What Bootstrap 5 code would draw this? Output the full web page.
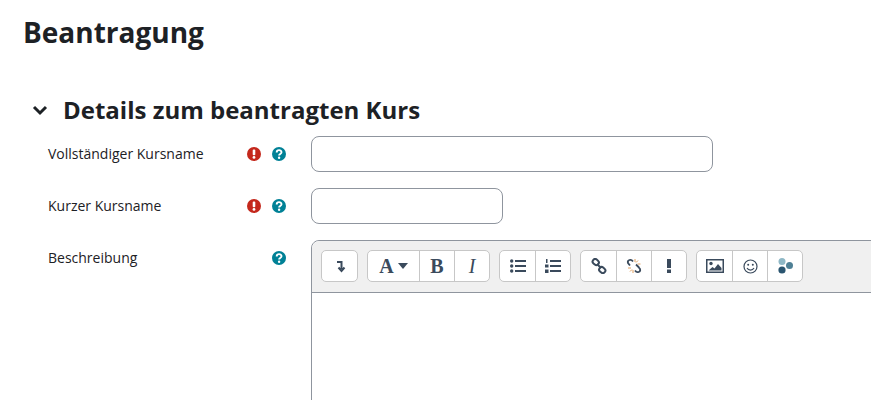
<!DOCTYPE html>
<html lang="de">
<head>
    <meta charset="UTF-8">
    <meta name="viewport" content="width=device-width, initial-scale=1.0">
    <title>Beantragung</title>
    <link rel="stylesheet" href="https://cdn.jsdelivr.net/npm/bootstrap@5.3.1/dist/css/bootstrap.min.css">
    <style>
        html, body { height: 400px; overflow: hidden; }
        body { font-family: "Open Sans", "Noto Sans", sans-serif; color: #1d2125; background: #fff; }

        .page-wrap { padding: 12px 0 0 23px; width: 1000px; }
        .page-title { font-size: 28px; font-weight: 700; line-height: 40px; margin: 0 0 38px; font-family: "Open Sans", sans-serif; }

        .section-head { margin: 0 0 6px 9px; gap: 15px; height: 40px; }
        .section-title { font-size: 24px; font-weight: 700; line-height: 40px; margin: 0; }

        .form-line { margin-left: 25px; }
        .label-col { width: 199px; font-size: 14px; line-height: 20px; padding-top: 8px; flex-shrink: 0; }
        .icon-col { width: 64px; flex-shrink: 0; padding-top: 11px; gap: 11px; justify-content: flex-end; padding-right: 25px; }
        .help-icon, .req-icon { width: 14px; height: 14px; display: block; }

        .name-input { height: 36px; border: 1px solid #8f959e; border-radius: 8px; }
        .name-long { width: 402px; }
        .name-short { width: 192px; }

        .editor-box { width: 620px; height: 300px; border: 1px solid #8f959e; border-radius: 8px 0 0 0; }
        .editor-tools { background: #f0f0f0; height: 52px; padding: 9px; gap: 9px; border-bottom: 1px solid #8f959e; border-radius: 8px 0 0 0; }
        .tool-group { height: 32px; background: #fff; border: 1px solid #c7c7c7; border-radius: 5px; }
        .tool { width: 35px; height: 30px; color: #3a4a5c; border-left: 1px solid #c7c7c7; }
        .tool:first-child { border-left: 0; }
        .tool svg { display: block; }
        .tool-wide { width: 51px; }
        .tool-letter { font-family: "Liberation Serif", serif; font-weight: 700; font-size: 20px; line-height: 1; }
    </style>
</head>
<body>

<div class="page-wrap">
    <h2 class="page-title">Beantragung</h2>

    <div class="section-head d-flex align-items-center">
        <svg width="16" height="16" viewBox="0 0 16 16"><path d="M2 5l6 6 6-6" fill="none" stroke="#1d2125" stroke-width="3"/></svg>
        <h3 class="section-title">Details zum beantragten Kurs</h3>
    </div>

    <div class="form-line d-flex mb-3">
        <div class="label-col">Vollständiger Kursname</div>
        <div class="icon-col d-flex">
            <svg class="req-icon" viewBox="0 0 14 14"><circle cx="7" cy="7" r="7" fill="#c4281c"/><rect x="5.7" y="2.5" width="2.6" height="5.8" rx="1" fill="#fff"/><circle cx="7" cy="10.4" r="1.4" fill="#fff"/></svg>
            <svg class="help-icon" viewBox="0 0 14 14"><circle cx="7" cy="7" r="7" fill="#008196"/><path d="M4.7 5.4c0-3 4.8-3 4.8-.2 0 1.8-2.4 1.7-2.4 3.2" fill="none" stroke="#fff" stroke-width="1.9"/><circle cx="7.1" cy="10.8" r="1.2" fill="#fff"/></svg>
        </div>
        <input class="form-control name-input name-long" type="text">
    </div>

    <div class="form-line d-flex mb-3">
        <div class="label-col">Kurzer Kursname</div>
        <div class="icon-col d-flex">
            <svg class="req-icon" viewBox="0 0 14 14"><circle cx="7" cy="7" r="7" fill="#c4281c"/><rect x="5.7" y="2.5" width="2.6" height="5.8" rx="1" fill="#fff"/><circle cx="7" cy="10.4" r="1.4" fill="#fff"/></svg>
            <svg class="help-icon" viewBox="0 0 14 14"><circle cx="7" cy="7" r="7" fill="#008196"/><path d="M4.7 5.4c0-3 4.8-3 4.8-.2 0 1.8-2.4 1.7-2.4 3.2" fill="none" stroke="#fff" stroke-width="1.9"/><circle cx="7.1" cy="10.8" r="1.2" fill="#fff"/></svg>
        </div>
        <input class="form-control name-input name-short" type="text">
    </div>

    <div class="form-line d-flex">
        <div class="label-col">Beschreibung</div>
        <div class="icon-col d-flex">
            <svg class="help-icon" viewBox="0 0 14 14"><circle cx="7" cy="7" r="7" fill="#008196"/><path d="M4.7 5.4c0-3 4.8-3 4.8-.2 0 1.8-2.4 1.7-2.4 3.2" fill="none" stroke="#fff" stroke-width="1.9"/><circle cx="7.1" cy="10.8" r="1.2" fill="#fff"/></svg>
        </div>
        <div class="editor-box">
            <div class="editor-tools d-flex">
                <div class="tool-group d-flex">
                    <div class="tool d-flex align-items-center justify-content-center">
                        <svg width="14" height="14" viewBox="0 0 14 14"><path d="M4 3h4.5v7M5.5 8.500l3 3.500 3-3.500" fill="none" stroke="#3a4a5c" stroke-width="2"/></svg>
                    </div>
                </div>
                <div class="tool-group d-flex">
                    <div class="tool tool-wide d-flex align-items-center justify-content-center gap-1">
                        <span class="tool-letter">A</span>
                        <svg width="10" height="6" viewBox="0 0 10 6"><path d="M0 0h10L5 6z" fill="#3a4a5c"/></svg>
                    </div>
                    <div class="tool d-flex align-items-center justify-content-center"><span class="tool-letter">B</span></div>
                    <div class="tool d-flex align-items-center justify-content-center"><span class="tool-letter fw-normal fst-italic">I</span></div>
                </div>
                <div class="tool-group d-flex">
                    <div class="tool d-flex align-items-center justify-content-center">
                        <svg width="16" height="14" viewBox="0 0 16 14"><g fill="#3a4a5c"><circle cx="1.700" cy="2" r="1.700"/><circle cx="1.700" cy="7" r="1.700"/><circle cx="1.700" cy="12" r="1.700"/><rect x="5" y="1" width="11" height="2"/><rect x="5" y="6" width="11" height="2"/><rect x="5" y="11" width="11" height="2"/></g></svg>
                    </div>
                    <div class="tool d-flex align-items-center justify-content-center">
                        <svg width="16" height="14" viewBox="0 0 16 14"><g fill="#3a4a5c"><rect x="5" y="1" width="11" height="2"/><rect x="5" y="6" width="11" height="2"/><rect x="5" y="11" width="11" height="2"/><rect x="1" y="0" width="1.500" height="4"/><rect x="0" y="5.500" width="3.500" height="3"/><rect x="0" y="10.500" width="3.500" height="3.500"/></g></svg>
                    </div>
                </div>
                <div class="tool-group d-flex">
                    <div class="tool d-flex align-items-center justify-content-center">
                        <svg width="16" height="16" viewBox="0 0 16 16"><g fill="none" stroke="#3a4a5c" stroke-width="2"><rect x="1.500" y="1.500" width="6.500" height="5" rx="2.400" transform="rotate(40 4.700 4)"/><rect x="8" y="9.500" width="6.500" height="5" rx="2.400" transform="rotate(40 11.200 12)"/><path d="M6 6l4 4"/></g></svg>
                    </div>
                    <div class="tool d-flex align-items-center justify-content-center">
                        <svg width="16" height="16" viewBox="0 0 16 16"><path d="M7 3.500C5 .500 1 2 2 5l2 2.500M9 12.500c2 3 6 1.500 5-1.500l-2-2.500M10 6.500l3 3" fill="none" stroke="#3a4a5c" stroke-width="1.800"/><path d="M9 1v3M12 2.500l-2 2M14.500 6h-3M2 10h3M4 13.500l2-2M7 15v-3" stroke="#e0a060" stroke-width="1"/></svg>
                    </div>
                    <div class="tool d-flex align-items-center justify-content-center">
                        <svg width="6" height="14" viewBox="0 0 6 14"><path d="M1 0h4v9H1zM1 10.500h4V14H1z" fill="#3a4a5c"/></svg>
                    </div>
                </div>
                <div class="tool-group d-flex">
                    <div class="tool d-flex align-items-center justify-content-center">
                        <svg width="18" height="14" viewBox="0 0 18 14"><rect x=".75" y=".75" width="16.500" height="12.500" fill="#fff" stroke="#3a4a5c" stroke-width="1.500"/><circle cx="5" cy="4.500" r="1.700" fill="#3a4a5c"/><path d="M2.500 11.500l4-3.500 2 1.500 3.500-4.500 3.500 4v2.500z" fill="#3a4a5c"/></svg>
                    </div>
                    <div class="tool d-flex align-items-center justify-content-center">
                        <svg width="15" height="15" viewBox="0 0 15 15"><circle cx="7.500" cy="7.500" r="6.500" fill="none" stroke="#3a4a5c" stroke-width="1.200"/><circle cx="5.200" cy="5.800" r="1" fill="#3a4a5c"/><circle cx="9.800" cy="5.800" r="1" fill="#3a4a5c"/><path d="M4 9c1.500 2.700 5.500 2.700 7 0" fill="none" stroke="#3a4a5c" stroke-width="1.200"/></svg>
                    </div>
                    <div class="tool d-flex align-items-center justify-content-center">
                        <svg width="17" height="16" viewBox="0 0 17 16"><circle cx="5" cy="3.500" r="3.500" fill="#8fb8c6"/><circle cx="12.500" cy="7.500" r="3.500" fill="#4f8095"/><circle cx="5" cy="12" r="3.600" fill="#2a5570"/></svg>
                    </div>
                </div>
            </div>
        </div>
    </div>
</div>

</body>
</html>
